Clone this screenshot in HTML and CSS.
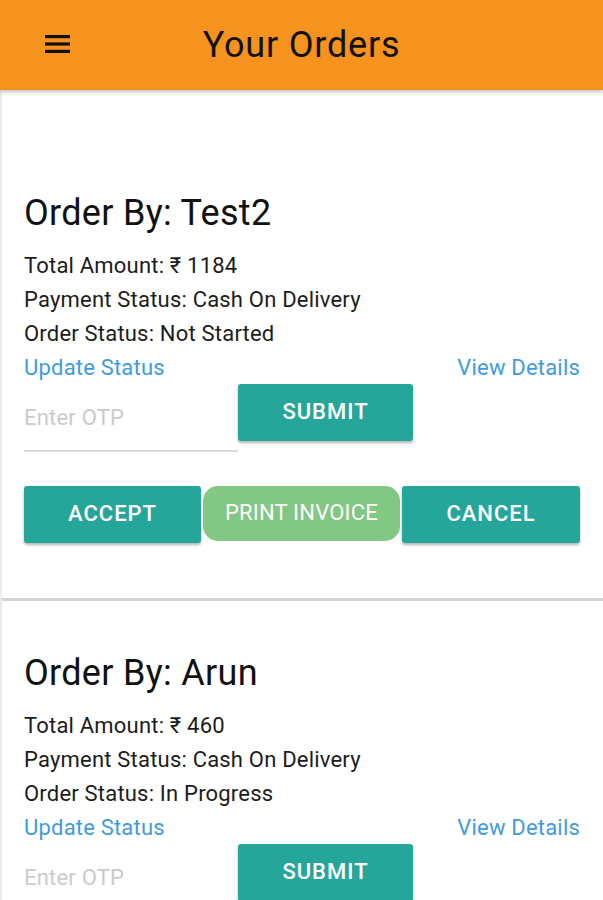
FILE: index.html
```html
<!DOCTYPE html>
<html>
<head>
<meta charset="utf-8">
<link rel="stylesheet" href="styles.css">
</head>
<body>
<header class="appbar">
  <div class="menu" aria-label="menu">
    <svg width="25" height="20" viewBox="0 0 25 20"><rect x="0" y="1" width="25" height="3.2" fill="#111"/><rect x="0" y="8.4" width="25" height="3.2" fill="#111"/><rect x="0" y="15.8" width="25" height="3.2" fill="#111"/></svg>
  </div>
  <h1 class="title">Your Orders</h1>
  <div></div>
</header>
<main class="list">
  <section class="card">
    <h2 class="order-by">Order By: Test2</h2>
    <p class="line">Total Amount: ₹ 1184</p>
    <p class="line">Payment Status: Cash On Delivery</p>
    <p class="line">Order Status: Not Started</p>
    <div class="links line"><a class="link">Update Status</a><a class="link">View Details</a></div>
    <div class="otp-row">
      <input class="otp" type="text" placeholder="Enter OTP">
      <button class="btn teal submit">SUBMIT</button>
    </div>
    <div class="actions">
      <button class="btn teal">ACCEPT</button>
      <button class="btn green">PRINT INVOICE</button>
      <button class="btn teal">CANCEL</button>
    </div>
  </section>
  <section class="card">
    <h2 class="order-by">Order By: Arun</h2>
    <p class="line">Total Amount: ₹ 460</p>
    <p class="line">Payment Status: Cash On Delivery</p>
    <p class="line">Order Status: In Progress</p>
    <div class="links line"><a class="link">Update Status</a><a class="link">View Details</a></div>
    <div class="otp-row">
      <input class="otp" type="text" placeholder="Enter OTP">
      <button class="btn teal submit">SUBMIT</button>
    </div>
  </section>
</main>
</body>
</html>
```
FILE: styles.css
```css
* { box-sizing: border-box; }
html, body { margin: 0; padding: 0; }
body {
  font-family: Roboto, "Noto Sans", "DejaVu Sans", sans-serif;
  background: #fff;
  color: #1a1a1a;
  width: 603px;
  overflow: hidden;
}
.appbar {
  height: 90px;
  background: #F6921E;
  display: grid;
  grid-template-columns: 1fr auto 1fr;
  align-items: center;
  box-shadow: 0 2px 4px rgba(0,0,0,0.25);
  position: relative;
  z-index: 2;
}
.menu {
  padding-left: 45px;
  display: flex;
  align-items: center;
  height: 20px;
  margin-top: -2px;
}
.title {
  margin: 0;
  font-weight: 400;
  font-size: 36px;
  line-height: 40px;
  letter-spacing: 0.8px;
  color: #111;
}
.list {
  padding-top: 51px;
  border-left: 2px solid #ececec;
}
.card {
  padding: 52px 23px 55px 22px;
  border-bottom: 3px solid #d4d4d4;
}
.order-by {
  margin: 0 0 16px 0;
  font-weight: 400;
  font-size: 36px;
  line-height: 40px;
  letter-spacing: 0.3px;
  color: #111;
}
.line {
  margin: 0;
  font-size: 22px;
  line-height: 34px;
  letter-spacing: 0.2px;
  color: #1c1c1c;
}
.links {
  display: flex;
  justify-content: space-between;
}
.link {
  color: #3f9be0;
}
.otp-row {
  display: flex;
  align-items: flex-start;
  margin-top: -1px;
}
.otp {
  width: 214px;
  height: 68px;
  border: none;
  border-bottom: 2px solid #dcdcdc;
  font-family: inherit;
  font-size: 22px;
  letter-spacing: 0.2px;
  padding: 0;
  background: transparent;
  outline: none;
}
.otp::placeholder { color: #cbcbcb; }
.btn {
  border: none;
  color: #fff;
  font-family: inherit;
  font-size: 22px;
  font-weight: 500;
  letter-spacing: 1px;
  height: 57px;
  padding: 0 0 3px 0;
  border-radius: 3px;
}
.teal {
  background: #26A69A;
  box-shadow: 0 2px 3px rgba(0,0,0,0.3);
}
.green {
  background: #82C783;
  border-radius: 15px;
  height: 55px;
  font-weight: 400;
  letter-spacing: 0.2px;
}
.submit {
  width: 175px;
}
.actions {
  margin-top: 34px;
  display: grid;
  grid-template-columns: 177px 197px 178px;
  justify-content: space-between;
  align-items: start;
}
```
